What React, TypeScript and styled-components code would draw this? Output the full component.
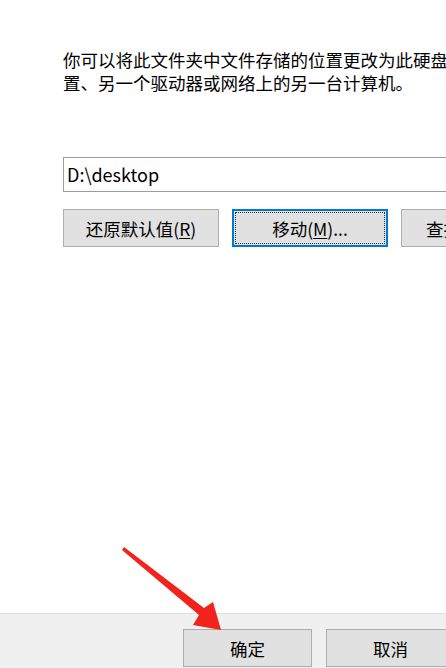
import React from "react";
import styled, { createGlobalStyle } from "styled-components";

const Global = createGlobalStyle`
  html, body { margin: 0; padding: 0; background: #ffffff; }
  body { width: 446px; height: 668px; overflow: hidden; }
  #root { width: 446px; height: 668px; }
`;

const Dialog = styled.div`
  position: relative;
  width: 446px;
  height: 668px;
  overflow: hidden;
  display: flex;
  flex-direction: column;
  background: #ffffff;
  font-family: "Noto Sans CJK SC", "Noto Sans", sans-serif;
  color: #000;
`;

const Content = styled.div`
  flex: 1;
  padding: 48px 0 0 63px;
  display: flex;
  flex-direction: column;
`;

const Paragraph = styled.p`
  margin: 0;
  font-size: 17.5px;
  line-height: 23px;
  white-space: nowrap;
  color: #000;
`;

const PathInput = styled.div`
  margin-top: 63px;
  width: 420px;
  height: 35px;
  box-sizing: border-box;
  border: 1px solid #9c9c9c;
  border-right: none;
  display: flex;
  align-items: center;
  padding: 0 0 2px 3px;
  font-size: 18px;
  color: #000;
`;

const ButtonRow = styled.div`
  margin-top: 17px;
  display: flex;
  gap: 13px;
  flex-shrink: 0;
`;

const Button = styled.div<{ $w: number; $h: number; $focused?: boolean }>`
  position: relative;
  flex-shrink: 0;
  width: ${(p) => p.$w}px;
  height: ${(p) => p.$h}px;
  box-sizing: border-box;
  background: #e1e1e1;
  border: ${(p) => (p.$focused ? "2px solid #0078d7" : "1px solid #adadad")};
  display: flex;
  align-items: center;
  justify-content: center;
  font-size: 17.5px;
  color: #000;
  white-space: nowrap;
  ${(p) =>
    p.$focused
      ? `&::after {
          content: "";
          position: absolute;
          inset: 1px;
          border: 1px dotted #333;
        }`
      : ""}
`;

const Key = styled.span`
  text-decoration: underline;
  text-underline-offset: 2px;
`;

const Footer = styled.div`
  height: 55px;
  flex-shrink: 0;
  box-sizing: border-box;
  background: #f0f0f0;
  border-top: 1px solid #dfdfdf;
  padding: 15px 0 0 183px;
  display: flex;
  gap: 14px;
`;

const Arrow = styled.svg`
  position: absolute;
  left: 0;
  top: 0;
  pointer-events: none;
`;

export default function App() {
  return (
    <>
      <Global />
      <Dialog>
        <Content>
          <Paragraph>
            你可以将此文件夹中文件存储的位置更改为此硬盘上的另一位
            <br />
            置、另一个驱动器或网络上的另一台计算机。
          </Paragraph>
          <PathInput>D:\desktop</PathInput>
          <ButtonRow>
            <Button $w={156} $h={38}>
              还原默认值(<Key>R</Key>)
            </Button>
            <Button $w={156} $h={38} $focused>
              移动(<Key>M</Key>)...
            </Button>
            <Button $w={156} $h={38}>
              查找目标(<Key>F</Key>)...
            </Button>
          </ButtonRow>
        </Content>
        <Footer>
          <Button $w={129} $h={38}>确定</Button>
          <Button $w={129} $h={38}>取消</Button>
        </Footer>
        <Arrow width="446" height="668" viewBox="0 0 446 668">
          <polygon
            points="122,550 124,547 204,608 213,602 221,630 193,625 199,615"
            fill="#f2221c"
          />
        </Arrow>
      </Dialog>
    </>
  );
}
